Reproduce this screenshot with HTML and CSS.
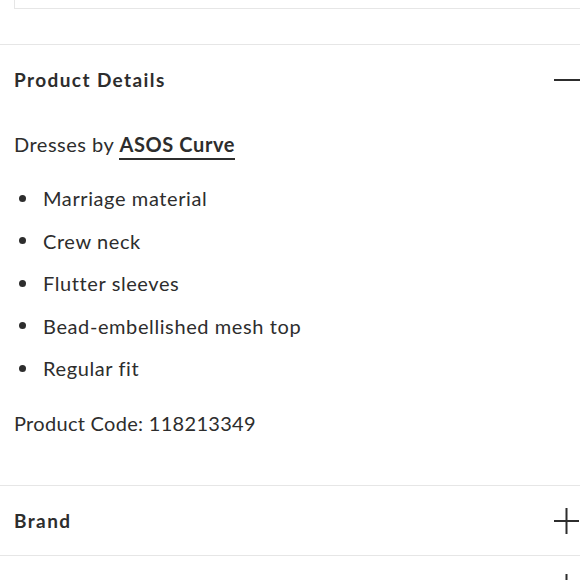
FILE: index.html
```html
<!DOCTYPE html>
<html lang="en">
<head>
<meta charset="utf-8">
<title>Product Details</title>
<link rel="stylesheet" href="styles.css">
</head>
<body>
<div class="top-box"></div>
<section class="panel">
  <div class="panel-head">
    <h2 class="panel-title">Product Details</h2>
    <svg class="icon" viewBox="0 0 26 26" width="26" height="26"><path d="M0 13H26" stroke="#2d2d2d" stroke-width="2"/></svg>
  </div>
  <div class="panel-body">
    <p class="by">Dresses by <a class="brand-link" href="#">ASOS Curve</a></p>
    <ul class="features">
      <li>Marriage material</li>
      <li>Crew neck</li>
      <li>Flutter sleeves</li>
      <li>Bead-embellished mesh top</li>
      <li>Regular fit</li>
    </ul>
    <p class="code">Product Code: 118213349</p>
  </div>
</section>
<section class="panel">
  <div class="panel-head">
    <h2 class="panel-title">Brand</h2>
    <svg class="icon" viewBox="0 0 26 26" width="26" height="26"><path d="M0 13H25M12.5 0V26" stroke="#2d2d2d" stroke-width="2"/></svg>
  </div>
</section>
<section class="panel">
  <div class="panel-head panel-head-next">
    <svg class="icon" viewBox="0 0 26 26" width="26" height="26"><path d="M0 13H25M12.5 0V26" stroke="#2d2d2d" stroke-width="2"/></svg>
  </div>
</section>
</body>
</html>
```
FILE: styles.css
```css
html, body {
  margin: 0;
  padding: 0;
  background: #fff;
}
body {
  font-family: Lato, "Liberation Sans", sans-serif;
  color: #2d2d2d;
  overflow: hidden;
  height: 580px;
}
.top-box {
  margin-left: 14px;
  height: 8px;
  border-left: 1px solid #e6e6e6;
  border-bottom: 1px solid #e6e6e6;
}
.panel {
  margin-top: 35px;
  border-top: 1px solid #e6e6e6;
}
.panel + .panel {
  margin-top: 0;
}
.panel-head {
  height: 69px;
  display: flex;
  align-items: center;
  justify-content: space-between;
  padding-left: 14px;
}
.panel-head-next {
  justify-content: flex-end;
  align-items: flex-start;
  padding-top: 18px;
  box-sizing: border-box;
}
.panel-title {
  margin: 0;
  font-size: 19px;
  font-weight: 700;
  letter-spacing: 1.4px;
}
.icon {
  display: block;
}
.panel-body {
  padding: 16px 0 48px 14px;
}
.by {
  margin: 0;
  font-size: 20px;
  line-height: 28px;
  letter-spacing: 0.5px;
}
.brand-link {
  color: #2d2d2d;
  font-weight: 700;
  letter-spacing: 0.6px;
  text-decoration: none;
  border-bottom: 2px solid #2d2d2d;
  padding-bottom: 2px;
}
.features {
  list-style: none;
  margin: 26px 0 0;
  padding: 0;
  display: flex;
  flex-direction: column;
  gap: 14.6px;
}
.features li {
  display: flex;
  align-items: center;
  font-size: 20px;
  line-height: 28px;
  letter-spacing: 0.6px;
}
.features li::before {
  content: "";
  width: 7px;
  height: 7px;
  border-radius: 50%;
  background: #2d2d2d;
  margin-left: 4.5px;
  margin-right: 17.5px;
  flex: none;
}
.code {
  margin: 27px 0 0;
  font-size: 20px;
  line-height: 28px;
  letter-spacing: 0.3px;
}
```
